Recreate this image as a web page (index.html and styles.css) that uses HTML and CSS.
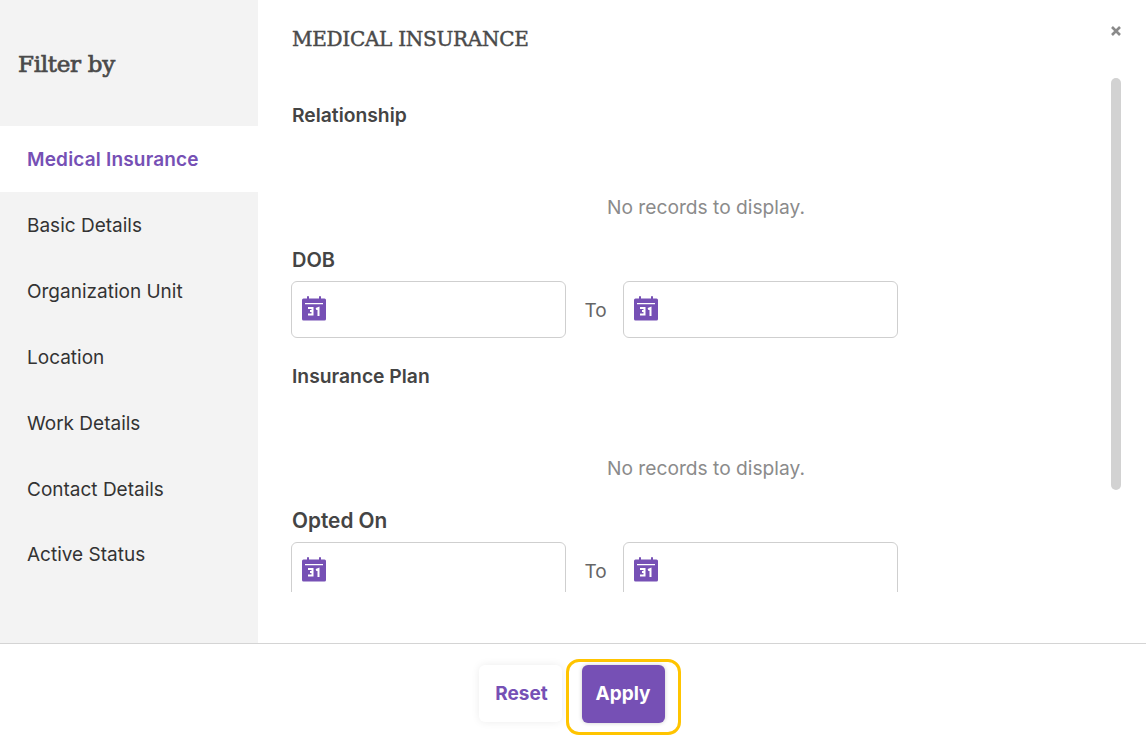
FILE: index.html
```html
<!DOCTYPE html>
<html lang="en">
<head>
<meta charset="utf-8">
<title>Filter by</title>
<link rel="stylesheet" href="styles.css">
</head>
<body>
<div class="panel">
  <div class="body">
    <aside class="side">
      <h2 class="side-title">Filter by</h2>
      <nav class="side-nav">
        <a class="nav-item active">Medical Insurance</a>
        <a class="nav-item">Basic Details</a>
        <a class="nav-item">Organization Unit</a>
        <a class="nav-item">Location</a>
        <a class="nav-item">Work Details</a>
        <a class="nav-item">Contact Details</a>
        <a class="nav-item">Active Status</a>
      </nav>
    </aside>
    <main class="main">
      <h1 class="main-title">MEDICAL INSURANCE</h1>
      <button class="close" aria-label="Close"><svg width="12" height="12" viewBox="0 0 12 12"><path d="M2 2l8 8M10 2l-8 8" stroke="#8a8a8a" stroke-width="2.6" fill="none"/></svg></button>
      <div class="thumb"></div>
      <div class="scroll">
        <div class="label">Relationship</div>
        <div class="empty">No records to display.</div>
        <div class="label dob">DOB</div>
        <div class="range">
          <div class="date"><svg class="cal" width="24" height="26" viewBox="0 0 24 26"><use href="#cal"/></svg></div>
          <span class="to">To</span>
          <div class="date"><svg class="cal" width="24" height="26" viewBox="0 0 24 26"><use href="#cal"/></svg></div>
        </div>
        <div class="label plan">Insurance Plan</div>
        <div class="empty">No records to display.</div>
        <div class="label big">Opted On</div>
        <div class="range">
          <div class="date"><svg class="cal" width="24" height="26" viewBox="0 0 24 26"><use href="#cal"/></svg></div>
          <span class="to">To</span>
          <div class="date"><svg class="cal" width="24" height="26" viewBox="0 0 24 26"><use href="#cal"/></svg></div>
        </div>
      </div>
    </main>
  </div>
  <footer class="foot">
    <button class="btn reset">Reset</button>
    <span class="focus-ring"><button class="btn apply">Apply</button></span>
  </footer>
</div>
<svg class="defs" width="0" height="0">
  <symbol id="cal" viewBox="0 0 24 26">
    <path fill="#7650b5" fill-rule="evenodd" d="M1.500 3.500H5V2a1 1 0 0 1 2 0v1.500h10V2a1 1 0 0 1 2 0v1.500h3.500A1.500 1.500 0 0 1 24 5v19a1.500 1.500 0 0 1-1.500 1.500h-21A1.500 1.500 0 0 1 0 24V5a1.500 1.500 0 0 1 1.500-1.500zM3 8v1.200h18V8z"/>
    <path fill="none" stroke="#fff" stroke-width="2" d="M6 13h4.500v3H8M10.500 16v3.500H6M14 14l2.500-1v8"/>
  </symbol>
</svg>
</body>
</html>
```
FILE: styles.css
```css
* { box-sizing: border-box; }
html, body { margin: 0; height: 100%; background: #fff; }
body { font-family: Inter, "Liberation Sans", sans-serif; color: #3f3f3f; overflow: hidden; }
.defs { position: absolute; }
.panel { width: 1146px; height: 739px; display: flex; flex-direction: column; }
.body { height: 643px; display: flex; flex: none; }
.side { width: 258px; background: #f3f3f3; flex: none; }
.side-title { margin: 0; height: 126px; padding: 47px 0 0 18px; font: 400 23px/34px "DejaVu Serif", serif; letter-spacing: -.3px; -webkit-text-stroke: .7px #4a4a4a; color: #4a4a4a; }
.side-nav { display: flex; flex-direction: column; }
.nav-item { height: 65.83px; display: flex; align-items: center; padding: 2px 0 0 27px; font-size: 19px; font-weight: 400; color: #333; }
.nav-item.active { background: #fff; color: #7650b5; font-weight: 600; letter-spacing: .18px; }
.main { flex: 1; position: relative; padding: 0 0 0 33px; display: flex; flex-direction: column; }
.main-title { margin: 0 0 0 1px; height: 103px; padding-top: 25px; font: 400 20px/28px "DejaVu Serif", serif; letter-spacing: -.28px; -webkit-text-stroke: .45px #4a4a4a; color: #4a4a4a; }
.close { position: absolute; top: 25px; right: 24px; width: 12px; height: 12px; padding: 0; border: 0; background: none; display: flex; }
.thumb { position: absolute; left: 853px; top: 78px; width: 10px; height: 412px; border-radius: 5px; background: #d2d2d2; }
.scroll { height: 489px; overflow: hidden; }
.label { margin-left: 1px; font-size: 19.300px; font-weight: 600; line-height: 24px; color: #444; }
.label.dob { font-size: 20px; }
.label.big { font-size: 20.800px; }
.label.plan { margin-top: 26px; }
.empty { margin-left: 1px; padding: 68px 0 29px; text-align: center; width: 828px; font-size: 19.200px; line-height: 24px; color: #8b8b8b; }
.range { display: flex; align-items: center; margin-top: 9px; }
.date { width: 275px; height: 57px; border: 1px solid #cfcfcf; border-radius: 6px; background: #fff; display: flex; align-items: center; padding: 0 0 3px 10px; }
.cal { display: block; }
.to { width: 57px; padding: 2px 0 0 2px; text-align: center; font-size: 19px; color: #666; }
.foot { flex: 1; border-top: 1px solid #d4d4d4; display: flex; justify-content: center; align-items: flex-start; gap: 4px; padding: 15px 0 0 13px; }
.btn { width: 83px; height: 58px; border: 0; border-radius: 6px; font: 700 19px Inter, sans-serif; }
.reset { margin-top: 6px; height: 57px; padding: 0 0 0 3px; background: #fff; color: #7650b5; box-shadow: 0 0 8px rgba(0,0,0,.08); }
.apply { padding: 0 0 2px; background: #7650b5; color: #fff; box-shadow: 0 0 4px rgba(0,0,0,.2); }
.focus-ring { display: flex; padding: 3px 13px 9px; border: 3px solid #ffc400; border-radius: 13px; }
```
